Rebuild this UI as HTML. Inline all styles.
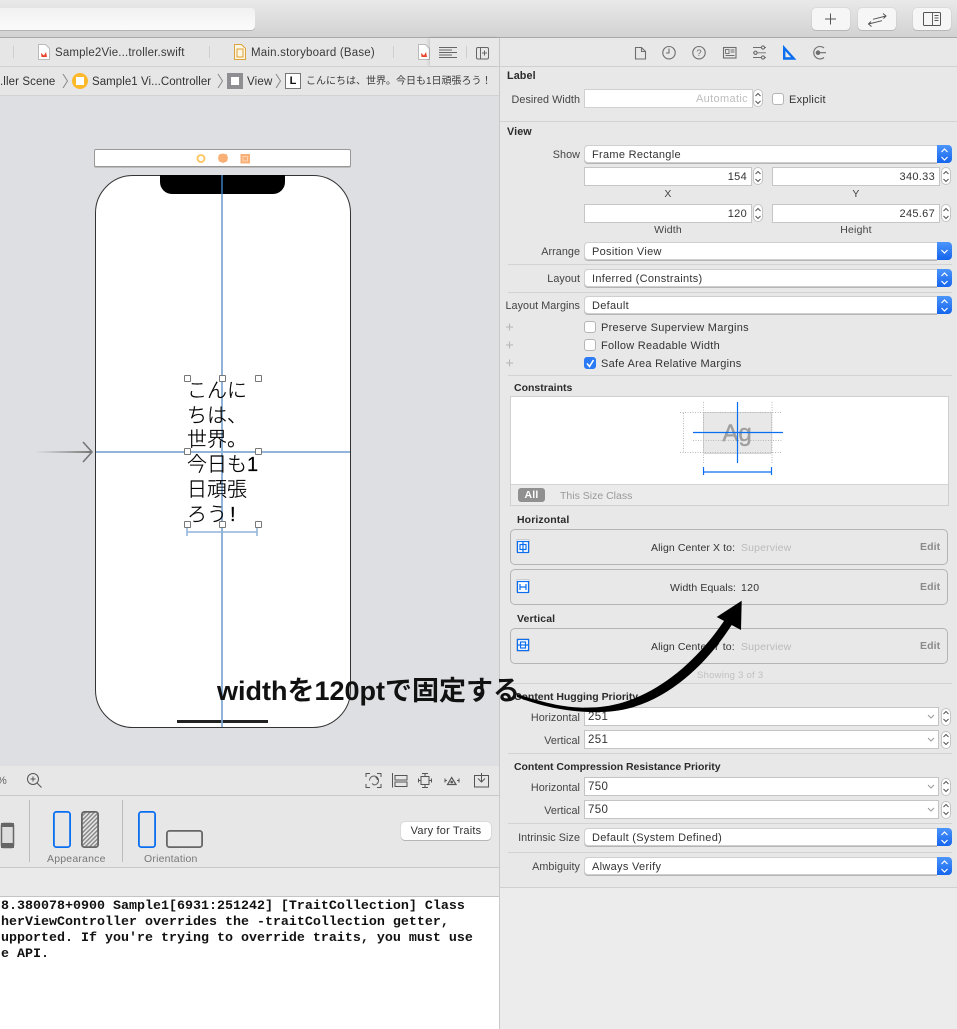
<!DOCTYPE html>
<html lang="ja"><head><meta charset="utf-8"><title>Xcode</title>
<style>
html,body{margin:0;padding:0;width:957px;height:1029px;overflow:hidden;background:#e9e9e9}
body{position:relative;font-family:"Liberation Sans","Noto Sans CJK JP",sans-serif;font-size:11px;color:#333}
div,svg{position:absolute}
.t{white-space:nowrap;line-height:14px;letter-spacing:.2px;margin-top:1px}
.r{right:377px;text-align:right;color:#444;font-size:10.8px;letter-spacing:.05px}
.b{font-weight:bold;color:#2b2b2b;font-size:10.8px;letter-spacing:.1px}
.hl{left:508px;width:444px;height:1px;background:#d2d2d2}
.sel{left:584px;width:352px;height:16px;background:#fff;border:1px solid #cfcfcf;border-right:0;border-radius:4px 0 0 4px;box-shadow:0 1px 0 #b5b5b5}
.sel span{position:absolute;left:7px;top:2px;line-height:14px;letter-spacing:.3px;color:#333}
.blue{left:937px;width:15px;height:18px;background:linear-gradient(#4b95fb,#1565ee);border-radius:0 4px 4px 0}
.fld{height:17px;background:#fff;border:1px solid #c6c6c6;text-align:right;line-height:19px;padding-right:4px;letter-spacing:.3px;color:#333}
.st{width:8px;height:16px;background:#fff;border:1px solid #c4c4c4;border-radius:5px}
.cb{width:10px;height:10px;background:#fff;border:1px solid #b5b5b5;border-radius:3px}
.row{left:510px;width:436px;height:34px;border:1px solid #b4b4b4;border-radius:5px;background:#e8e8e8}
.ci{left:515.5px;width:12px;height:12px;background:#fff;border:1px solid #ccc;border-radius:2px}
.combo{left:584px;width:353px;height:17px;background:#fff;border:1px solid #c4c4c4}
.combo span{position:absolute;left:3px;top:2px;line-height:15px;letter-spacing:.35px;font-size:11.5px;color:#333}
.h{width:5px;height:5px;background:#fff;border:1px solid #777;border-radius:1px}
.g{color:#bbb}
.s{font-size:10.5px}
</style></head><body>
<!-- top toolbar -->
<div style="left:0;top:0;width:957px;height:37px;background:linear-gradient(#e9e9e9,#d2d2d2)"></div>
<div style="left:0;top:37px;width:957px;height:1px;background:#a9a9a9"></div>
<div style="left:-10px;top:8px;width:265px;height:22px;background:linear-gradient(#f1f1f1,#fbfbfb);border-radius:4px;box-shadow:0 1px 0 #b3b3b3"></div>
<div style="left:812px;top:8px;width:38px;height:22px;background:#f6f6f6;border-radius:4px;box-shadow:0 0 1px #aaa,0 1px 0 #bbb"></div>
<div style="left:858px;top:8px;width:38px;height:22px;background:#f6f6f6;border-radius:4px;box-shadow:0 0 1px #aaa,0 1px 0 #bbb"></div>
<div style="left:913px;top:8px;width:38px;height:22px;background:#f6f6f6;border-radius:4px;box-shadow:0 0 1px #aaa,0 1px 0 #bbb"></div>
<svg style="left:812px;top:8px" width="139" height="22" fill="none" stroke="#555" stroke-width="1">
<path d="M18.500 5.500v11M13 11h11"/>
<path d="M61 11.300L74 8M71 5.500L74 8L71.500 10.500M56.500 16L70 12.700M59 13.500L56.500 16L59.500 18.500"/>
<rect x="111.500" y="4.500" width="17" height="13" rx="1"/><path d="M120.500 4.500v13M122.500 7.500h4M122.500 10h4M122.500 12.500h4" stroke-width=".9"/>
</svg>

<!-- tabs -->
<div style="left:0;top:38px;width:499px;height:28px;background:#e6e6e6"></div>
<div style="left:0;top:66px;width:499px;height:1px;background:#d3d3d3"></div>
<div style="left:13px;top:46px;width:1px;height:12px;background:#cfcfcf"></div>
<div style="left:209px;top:46px;width:1px;height:12px;background:#cfcfcf"></div>
<div style="left:393px;top:46px;width:1px;height:12px;background:#cfcfcf"></div>
<svg style="left:38px;top:44px" width="12" height="16"><path d="M.5.500h7l4 4v11H.5z" fill="#fff" stroke="#bbb"/><path d="M3 9l3 2.500L8 8l1 5H3.500z" fill="#e8452c"/></svg>
<div class="t" style="left:55px;top:45px;font-size:11.5px;letter-spacing:.15px;color:#3a3a3a">Sample2Vie...troller.swift</div>
<svg style="left:234px;top:44px" width="12" height="16"><path d="M.5.500h7l4 4v11H.5z" fill="#fdf6e3" stroke="#d9a441"/><rect x="3" y="5" width="6" height="8" fill="none" stroke="#e0a030"/></svg>
<div class="t" style="left:251px;top:45px;font-size:11.5px;letter-spacing:.2px;color:#3a3a3a">Main.storyboard (Base)</div>
<svg style="left:418px;top:44px" width="12" height="16"><path d="M.5.500h7l4 4v11H.5z" fill="#fff" stroke="#bbb"/><path d="M3 9l3 2.500L8 8l1 5H3.500z" fill="#e8452c"/></svg>
<div style="left:430px;top:38px;width:69px;height:28px;background:#e8e8e8;box-shadow:-1px 0 3px rgba(0,0,0,.14)"></div>
<div style="left:466px;top:46px;width:1px;height:12px;background:#cfcfcf"></div>
<svg style="left:438px;top:45px" width="54" height="15" fill="none" stroke="#666" stroke-width="1">
<path d="M1 2.500h18M1 5h13M1 7.500h18M1 10h13M1 12.500h18"/>
<rect x="38.500" y="2.500" width="12" height="11.500" rx="1.500"/><path d="M42.500 2.500v11.500M44 8h5M46.500 5.500v5"/>
</svg>

<!-- jump bar -->
<div style="left:0;top:67px;width:499px;height:28px;background:#e6e6e6"></div>
<div style="left:0;top:95px;width:499px;height:1px;background:#d2d2d2"></div>
<div class="t" style="left:0;top:74px;font-size:11.5px;letter-spacing:.1px">.ller Scene</div>
<svg style="left:62px;top:73px" width="230" height="16" fill="none" stroke="#888"><path d="M1 1l4.500 7L1 15M156 1l4.500 7-4.500 7M214 1l4.500 7-4.500 7"/></svg>
<div style="left:72px;top:73px;width:16px;height:16px;border-radius:50%;background:#fdb92c"></div>
<div style="left:76px;top:77px;width:8px;height:8px;background:#fff"></div>
<div class="t" style="left:92px;top:74px;font-size:11.5px;letter-spacing:.05px">Sample1 Vi...Controller</div>
<div style="left:227px;top:73px;width:16px;height:16px;background:#8e8e93"></div>
<div style="left:231px;top:77px;width:8px;height:8px;background:#fff"></div>
<div class="t" style="left:247px;top:74px;font-size:11.5px">View</div>
<div style="left:285px;top:73px;width:14px;height:14px;background:#fff;border:1px solid #777;text-align:center;font-weight:bold;line-height:15px;color:#111">L</div>
<div class="t" style="left:306px;top:74px;font-size:10px;letter-spacing:0;color:#3a3a3a">こんにちは、世界。今日も1日頑張ろう！</div>

<!-- canvas -->
<div style="left:0;top:96px;width:499px;height:670px;background:#dedfe3"></div>
<div style="left:94px;top:149px;width:255px;height:16px;background:#fff;border:1px solid #999;border-radius:2px;box-shadow:0 1px 0 #bbb"></div>
<svg style="left:195px;top:153px" width="56" height="12">
<circle cx="6" cy="5.500" r="3.500" fill="#fff" stroke="#fdc45c" stroke-width="1.800"/>
<path d="M24 1.500l4-1 4 1 1 3.500-1 3.500-4 1.500-4-1.500-1-3.500z" fill="#f9b077"/>
<rect x="45.500" y="1" width="9.500" height="9.500" fill="#f9b077"/><rect x="48" y="3.500" width="4.500" height="4.500" fill="none" stroke="#fcd5b0"/>
</svg>
<div style="left:95px;top:175px;width:254px;height:551px;background:#fff;border:1px solid #333;border-radius:38px"></div>
<div style="left:160px;top:175px;width:125px;height:19px;background:#000;border-radius:0 0 12px 12px"></div>
<div style="left:221px;top:175px;width:2px;height:19px;background:#2a5c8f"></div>
<div style="left:221px;top:194px;width:2px;height:533px;background:#8fb3d9"></div>
<div style="left:96px;top:451px;width:254px;height:2px;background:#92b4d8"></div>
<div style="left:177px;top:720px;width:91px;height:3px;background:#222"></div>
<div style="left:221px;top:720px;width:2px;height:3px;background:#6d93ba"></div>
<svg style="left:30px;top:440px" width="66" height="24" fill="none"><defs><linearGradient id="a"><stop offset="0" stop-color="#888" stop-opacity="0"/><stop offset="1" stop-color="#777"/></linearGradient></defs><rect x="5" y="11" width="56" height="2" fill="url(#a)"/><path d="M53 2l9 10-9 10" stroke="#777" stroke-width="1.600"/></svg>
<div style="left:187px;top:379px;width:78px;font-size:20px;line-height:24.700px;color:#000;white-space:nowrap;font-weight:300;-webkit-text-stroke:.2px #000">こんに<br>ちは、<br>世界。<br>今日も1<br>日頑張<br>ろう<span style="margin-left:3px;font-family:'Liberation Sans',sans-serif">!</span></div>
<div class="h" style="left:184px;top:375px"></div><div class="h" style="left:219px;top:375px"></div><div class="h" style="left:255px;top:375px"></div>
<div class="h" style="left:184px;top:448px"></div><div class="h" style="left:255px;top:448px"></div>
<div class="h" style="left:184px;top:521px"></div><div class="h" style="left:219px;top:521px"></div><div class="h" style="left:255px;top:521px"></div>
<svg style="left:185px;top:526px" width="76" height="12" fill="none" stroke="#8fb3d9" stroke-width="1.500"><path d="M2 2v8M72 2v8M2 6h70"/></svg>

<!-- canvas bottom toolbar -->
<div style="left:0;top:766px;width:499px;height:29px;background:#e7e7e7"></div>
<div style="left:0;top:795px;width:499px;height:1px;background:#c8c8c8"></div>
<div class="t" style="left:-3px;top:773px;color:#666">%</div>
<svg style="left:26px;top:772px" width="16" height="17" fill="none" stroke="#555"><circle cx="7" cy="7" r="5.500"/><path d="M4.500 7h5M7 4.500v5M11 11l4.500 4.500"/></svg>
<svg style="left:365px;top:772px" width="128" height="18" fill="none" stroke="#555" stroke-width="1">
<path d="M1 5V1.500h4M12 1.500h4V5M16 12v3.500h-4M5 15.500H1V12"/><path d="M4.500 8.500a4.500 4.500 0 1 1 4.500 4.500l-2-1.500M12.500 8a4 4 0 0 0-2-3"/>
<path d="M27.500 1v14.500M30 3.500h12v4.500H30zM30 10h12v4.500H30z"/>
<rect x="56" y="4.500" width="8" height="8"/><path d="M57 1.500h6M60 1.500v3M57 15.500h6M60 12.500v3M53.500 6.500v4M53.500 8.500h2.500M66.500 6.500v4M64 8.500h2.500"/>
<path d="M82.500 12.500l4.200-7 4.300 7z" stroke-width="1.200"/><circle cx="86.700" cy="10" r="1.300" fill="#555" stroke="none"/><path d="M80 6.500v4M80 8.500h2M94 6.500v4M92 8.500h2"/>
<rect x="109.500" y="3.500" width="14" height="11.500"/><path d="M116.500 1v9M113 6.500l3.500 3.500 3.500-3.500"/>
</svg>

<!-- device bar -->
<div style="left:0;top:796px;width:499px;height:71px;background:#e7e7e7"></div>
<div style="left:0;top:867px;width:499px;height:1px;background:#c8c8c8"></div>
<div style="left:0;top:868px;width:499px;height:28px;background:#eaeaea"></div>
<div style="left:0;top:896px;width:499px;height:1px;background:#c4c4c4"></div>
<div style="left:29px;top:800px;width:1px;height:62px;background:#bdbdbd"></div>
<div style="left:122px;top:800px;width:1px;height:62px;background:#bdbdbd"></div>
<svg style="left:0;top:808px" width="210" height="44" fill="none">
<defs><pattern id="hh" width="3" height="3" patternUnits="userSpaceOnUse" patternTransform="rotate(-45)"><rect width="3" height="1.500" fill="#8a8a8a"/></pattern></defs>
<rect x="1.500" y="15.500" width="12" height="24" rx="2" stroke="#666" stroke-width="1.500" fill="#ddd"/><path d="M1 15h13v4H1zM1 35h13v5H1z" fill="#666"/>
<rect x="53.900" y="3.900" width="16.200" height="35.200" rx="2.500" stroke="#0a6ef0" stroke-width="1.800"/>
<rect x="81.900" y="3.900" width="16.200" height="35.200" rx="2.500" stroke="#666" stroke-width="1.800" fill="url(#hh)"/>
<rect x="138.900" y="3.900" width="16.200" height="35.200" rx="2.500" stroke="#0a6ef0" stroke-width="1.800"/>
<rect x="166.900" y="22.900" width="35.200" height="16.200" rx="2.500" stroke="#666" stroke-width="1.800"/>
</svg>
<div class="t" style="left:47px;top:851px;color:#777;font-size:10.500px">Appearance</div>
<div class="t" style="left:144px;top:851px;color:#777;font-size:10.500px">Orientation</div>
<div class="t" style="left:401px;top:822px;width:90px;height:18px;line-height:19px;margin-top:0;text-align:center;background:#fff;border-radius:4px;box-shadow:0 0 1px #999,0 1px 0 #bbb;color:#333">Vary for Traits</div>

<!-- console -->
<div style="left:0;top:897px;width:499px;height:132px;background:#fff"></div>
<div style="left:1px;top:899px;font:bold 13.330px/16px 'Liberation Mono',monospace;color:#111;white-space:pre">8.380078+0900 Sample1[6931:251242] [TraitCollection] Class
herViewController overrides the -traitCollection getter,
upported. If you're trying to override traits, you must use
e API.</div>
<div style="left:499px;top:38px;width:1px;height:991px;background:#c9c9c9"></div>

<!-- inspector -->
<div style="left:500px;top:38px;width:457px;height:991px;background:#e8e8e8"></div>
<div style="left:500px;top:66px;width:457px;height:1px;background:#d0d0d0"></div>
<svg style="left:630px;top:42px" width="200" height="22" fill="none" stroke="#6e6e6e" stroke-width="1.100">
<path d="M5.500 5.500h6l4 4v7.500h-10zM11.500 5.500v4h4"/>
<circle cx="39" cy="10.700" r="6.200"/><path d="M39 6.500v4.500h-3"/>
<circle cx="69" cy="10.700" r="6.200"/><text x="69" y="14.200" font-size="9.500" text-anchor="middle" fill="#6e6e6e" stroke="none" font-family="Liberation Sans">?</text>
<rect x="93.500" y="5.500" width="12.500" height="10.500"/><rect x="95.500" y="7.500" width="3.500" height="4" stroke-width=".9"/><path d="M100.500 8h4M100.500 10h4M95.500 13.500h9" stroke-width=".9"/>
<path d="M123 5.500h13M123 10.800h13M123 15.500h13" stroke-width=".9"/><circle cx="133" cy="5.500" r="1.600" fill="#e8e8e8"/><circle cx="125.500" cy="10.800" r="1.600" fill="#e8e8e8"/><circle cx="133" cy="15.500" r="1.600" fill="#e8e8e8"/>
<path d="M154.200 6v10.500h9.500z" stroke="#0a6ef0" stroke-width="2.400"/>
<path d="M194 6a6.200 6.200 0 1 0 0 9.400M188 10.700h8"/><circle cx="188" cy="10.700" r="2.300" fill="#6e6e6e" stroke="none"/>
</svg>

<div class="t b" style="left:507px;top:68px">Label</div>
<div class="t r" style="top:92px">Desired Width</div>
<div style="left:584px;top:89px;width:163px;height:17px;background:#fff;border:1px solid #d0d0d0;text-align:right;padding-right:4px;line-height:19px;color:#bdbdbd;letter-spacing:.35px">Automatic</div>
<div class="st" style="left:753px;top:89px"></div>
<div class="cb" style="left:772px;top:93px"></div>
<div class="t" style="left:789px;top:92px;letter-spacing:.25px">Explicit</div>
<div class="hl" style="left:500px;width:457px;top:121px"></div>
<div class="t b" style="left:507px;top:124px">View</div>

<div class="t r" style="top:147px">Show</div>
<div class="sel" style="top:145px"><span>Frame Rectangle</span></div><div class="blue" style="top:145px"></div>
<div class="fld" style="left:584px;top:167px;width:162px">154</div><div class="st" style="left:753px;top:167px"></div>
<div class="fld" style="left:772px;top:167px;width:162px">340.33</div><div class="st" style="left:941px;top:167px"></div>
<div class="t s" style="left:584px;width:168px;top:185.500px;text-align:center;color:#444">X</div>
<div class="t s" style="left:772px;width:168px;top:185.500px;text-align:center;color:#444">Y</div>
<div class="fld" style="left:584px;top:204px;width:162px">120</div><div class="st" style="left:753px;top:204px"></div>
<div class="fld" style="left:772px;top:204px;width:162px">245.67</div><div class="st" style="left:941px;top:204px"></div>
<div class="t s" style="left:584px;width:168px;top:222px;text-align:center;color:#444">Width</div>
<div class="t s" style="left:772px;width:168px;top:222px;text-align:center;color:#444">Height</div>

<div class="t r" style="top:244px">Arrange</div>
<div class="sel" style="top:242px"><span>Position View</span></div><div class="blue" style="top:242px"></div>
<div class="hl" style="top:264px"></div>
<div class="t r" style="top:271px">Layout</div>
<div class="sel" style="top:269px"><span>Inferred (Constraints)</span></div><div class="blue" style="top:269px"></div>
<div class="hl" style="top:292px"></div>
<div class="t r" style="top:298px">Layout Margins</div>
<div class="sel" style="top:296px"><span>Default</span></div><div class="blue" style="top:296px"></div>

<svg style="left:505px;top:321px" width="10" height="48" stroke="#b5b5b5" stroke-width="1"><path d="M1 6h7M4.500 2.500v7M1 24h7M4.500 20.500v7M1 42h7M4.500 38.500v7"/></svg>
<div class="cb" style="left:584px;top:321px"></div>
<div class="t" style="left:601px;top:320px;letter-spacing:.28px">Preserve Superview Margins</div>
<div class="cb" style="left:584px;top:339px"></div>
<div class="t" style="left:601px;top:338px;letter-spacing:.28px">Follow Readable Width</div>
<div class="cb" style="left:584px;top:357px;background:#2a7af5;border-color:#2a7af5"></div>
<svg style="left:584px;top:357px" width="12" height="12" fill="none" stroke="#fff" stroke-width="1.600"><path d="M3 6.500l2.500 3L9.500 3"/></svg>
<div class="t" style="left:601px;top:356px;letter-spacing:.28px">Safe Area Relative Margins</div>
<div class="hl" style="top:375px"></div>

<div class="t b" style="left:514px;top:380px;font-size:10.500px;letter-spacing:0">Constraints</div>
<div style="left:510px;top:396px;width:437px;height:108px;border:1px solid #cfcfcf;background:#ebebeb"></div>
<div style="left:511px;top:397px;width:437px;height:87px;background:#fff;border-bottom:1px solid #d4d4d4"></div>
<div style="left:703px;top:412px;width:67px;height:40px;background:#e8e8e8;border:1px solid #d4d4d4;border-radius:2px"></div>
<svg style="left:675px;top:398px" width="115" height="82" fill="none">
<g stroke="#b8b8b8" stroke-dasharray="1 1.500"><path d="M28.500 4v62M97 4v62M5 14.500h102M5 54.500h102M18 42.500h90M8.500 15v40"/></g>
<text x="62" y="43" font-family="Liberation Sans" font-size="24" fill="#a0a0a0" stroke="#a0a0a0" stroke-width=".4" text-anchor="middle">Ag</text>
<path d="M62.500 4v61M18 34.500h90M28.500 69v8M96.500 69v8M28.500 74h68" stroke="#0a6ef0" stroke-width="1.200"/>
</svg>
<div class="t s" style="left:518px;top:488px;width:27px;height:14px;line-height:15px;margin-top:0;background:#909090;border-radius:3px;color:#fff;text-align:center;font-weight:bold">All</div>
<div class="t s" style="left:560px;top:488px;color:#9a9a9a;letter-spacing:0">This Size Class</div>

<div class="t b" style="left:517px;top:512px;font-size:10.500px">Horizontal</div>
<div class="row" style="top:529px"></div>
<div class="ci" style="top:539px"></div>
<div class="t s" style="left:651px;top:540px;letter-spacing:.1px">Align Center X to:</div>
<div class="t g s" style="left:741px;top:540px;letter-spacing:.15px">Superview</div>
<div class="t s" style="left:920px;top:539px;font-weight:bold;color:#8a8a8a;letter-spacing:.1px">Edit</div>
<div class="row" style="top:569px"></div>
<div class="ci" style="top:579px"></div>
<div class="t s" style="left:670px;top:580px;letter-spacing:.1px">Width Equals:</div>
<div class="t s" style="left:741px;top:580px;letter-spacing:.3px">120</div>
<div class="t s" style="left:920px;top:579px;font-weight:bold;color:#8a8a8a;letter-spacing:.1px">Edit</div>
<div class="t b" style="left:517px;top:611px;font-size:10.500px">Vertical</div>
<div class="row" style="top:628px"></div>
<div class="ci" style="top:638px"></div>
<div class="t s" style="left:651px;top:639px;letter-spacing:.1px">Align Center Y to:</div>
<div class="t g s" style="left:741px;top:639px;letter-spacing:.15px">Superview</div>
<div class="t s" style="left:920px;top:638px;font-weight:bold;color:#8a8a8a;letter-spacing:.1px">Edit</div>
<svg style="left:516px;top:540px" width="14" height="112" fill="none" stroke="#0a6ef0" stroke-width="1.200">
<rect x="1.500" y="1.500" width="11" height="11"/><rect x="4" y="4.500" width="6" height="5"/><path d="M7 1.500v11"/>
<rect x="1.500" y="41.500" width="11" height="11"/><path d="M4 44v6M10 44v6M4 47h6"/>
<rect x="1.500" y="99.500" width="11" height="11"/><rect x="4.500" y="102" width="5" height="6"/><path d="M1.500 105h11"/>
</svg>
<div class="t" style="left:697px;top:668px;color:#c0c0c0;font-size:9.500px;letter-spacing:.25px">Showing 3 of 3</div>
<div class="hl" style="top:683px"></div>

<div class="t b" style="left:514px;top:689px;font-size:10.500px;letter-spacing:-.03px">Content Hugging Priority</div>
<div class="t r" style="top:710px">Horizontal</div>
<div class="combo" style="top:707px"><span>251</span></div><div class="st" style="left:941px;top:708px"></div>
<div class="t r" style="top:733px">Vertical</div>
<div class="combo" style="top:730px"><span>251</span></div><div class="st" style="left:941px;top:731px"></div>
<div class="hl" style="top:753px"></div>
<div class="t b" style="left:514px;top:759px;font-size:10.500px;letter-spacing:-.03px">Content Compression Resistance Priority</div>
<div class="t r" style="top:780px">Horizontal</div>
<div class="combo" style="top:777px"><span>750</span></div><div class="st" style="left:941px;top:778px"></div>
<div class="t r" style="top:803px">Vertical</div>
<div class="combo" style="top:800px"><span>750</span></div><div class="st" style="left:941px;top:801px"></div>
<div class="hl" style="top:823px"></div>
<div class="t r" style="top:830px">Intrinsic Size</div>
<div class="sel" style="top:828px"><span>Default (System Defined)</span></div><div class="blue" style="top:828px"></div>
<div class="hl" style="top:852px"></div>
<div class="t r" style="top:859px">Ambiguity</div>
<div class="sel" style="top:857px"><span>Always Verify</span></div><div class="blue" style="top:857px"></div>
<div style="left:500px;top:887px;width:457px;height:1px;background:#d0d0d0"></div>
<div style="left:500px;top:888px;width:457px;height:141px;background:#ececec"></div>

<!-- stepper + dropdown chevrons -->
<svg style="left:0;top:0;pointer-events:none" width="957" height="1029" fill="none" stroke="#555" stroke-width="1">
<path d="M755.500 96l2.500-2.500 2.500 2.500M755.500 101l2.500 2.500 2.500-2.500M755.500 174l2.500-2.500 2.500 2.500M755.500 179l2.500 2.500 2.500-2.500M755.500 211l2.500-2.500 2.500 2.500M755.500 216l2.500 2.500 2.500-2.500"/>
<path d="M943.500 174l2.500-2.500 2.500 2.500M943.500 179l2.500 2.500 2.500-2.500M943.500 211l2.500-2.500 2.500 2.500M943.500 216l2.500 2.500 2.500-2.500M943.500 714l2.500-2.500 2.500 2.500M943.500 719l2.500 2.500 2.500-2.500M943.500 737l2.500-2.500 2.500 2.500M943.500 742l2.500 2.500 2.500-2.500M943.500 784l2.500-2.500 2.500 2.500M943.500 789l2.500 2.500 2.500-2.500M943.500 807l2.500-2.500 2.500 2.500M943.500 812l2.500 2.500 2.500-2.500"/>
<path d="M928 715l3 3 3-3M928 738l3 3 3-3M928 785l3 3 3-3M928 808l3 3 3-3" stroke="#999"/>
<g stroke="#fff" stroke-width="1.200"><path d="M941.500 152l3-3 3 3M941.500 157l3 3 3-3M941.500 276l3-3 3 3M941.500 281l3 3 3-3M941.500 303l3-3 3 3M941.500 308l3 3 3-3M941.500 835l3-3 3 3M941.500 840l3 3 3-3M941.500 864l3-3 3 3M941.500 869l3 3 3-3M941.500 250l3 3 3-3"/></g>
</svg>

<!-- annotation -->
<div style="left:217px;top:673px;font-size:27px;line-height:36px;font-weight:bold;color:#111;white-space:nowrap">widthを120ptで固定する</div>
<svg style="left:0;top:0" width="957" height="1029">
<path d="M517 694C545 703 570 710 600 707C650 702 695 665 726 618L733 623C702 672 655 712 600 712C570 713 540 706 517 697Z" fill="#000"/>
<path d="M741.700 600.700L716.700 617L741 630Z" fill="#000"/>
</svg>
</body></html>
